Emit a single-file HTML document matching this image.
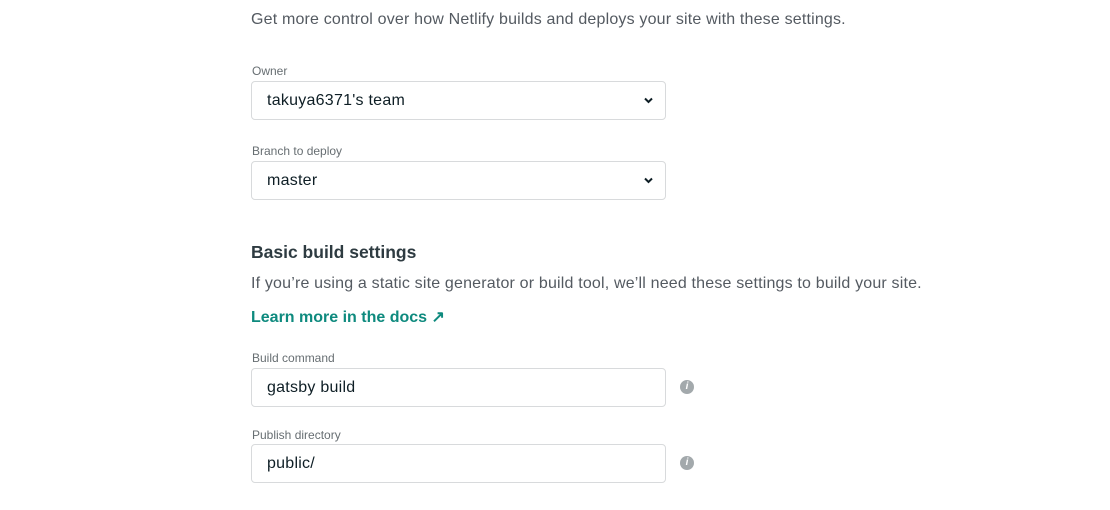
<!DOCTYPE html>
<html><head><style>
body{margin:0;width:1110px;height:510px;background:#fff;font-family:"Liberation Sans",Arial,sans-serif;position:relative;overflow:hidden}
.a{position:absolute}
.p{left:251px;font-size:16px;color:#545a61;letter-spacing:0.18px}
.lab{left:252px;font-size:12px;color:#676e72}
.box{left:251px;height:37px;border:1px solid #d8dadc;border-radius:4px;box-sizing:content-box;font-size:16px;color:#0e1e25;line-height:37px;padding-left:15px;width:398px;letter-spacing:0.25px}
.chev{position:absolute;right:12px;top:15px}
.info{left:680px;width:14px;height:14px;border-radius:50%;background:#a3a9ac;color:#fff;font-size:10px;font-weight:bold;font-style:italic;text-align:center;line-height:14px}
</style></head><body>
<div class="a p" style="top:11px">Get more control over how Netlify builds and deploys your site with these settings.</div>
<div class="a lab" style="top:64px">Owner</div>
<div class="a box" style="top:81px">takuya6371's team<svg class="chev" width="9" height="7" viewBox="0 0 9 7"><path d="M1 1.5l3.5 3.5 3.5-3.5" stroke="#0e1e25" stroke-width="2" fill="none"/></svg></div>
<div class="a lab" style="top:144px">Branch to deploy</div>
<div class="a box" style="top:161px">master<svg class="chev" width="9" height="7" viewBox="0 0 9 7"><path d="M1 1.5l3.5 3.5 3.5-3.5" stroke="#0e1e25" stroke-width="2" fill="none"/></svg></div>
<div class="a" style="left:251px;top:242px;font-size:17.5px;font-weight:bold;color:#2e3b41">Basic build settings</div>
<div class="a p" style="top:275px">If you’re using a static site generator or build tool, we’ll need these settings to build your site.</div>
<div class="a" style="left:251px;top:307px;font-size:16px;font-weight:bold;color:#0e8a7e">Learn more in the docs ↗</div>
<div class="a lab" style="top:351px">Build command</div>
<div class="a box" style="top:368px">gatsby build</div>
<div class="a info" style="top:380px">i</div>
<div class="a lab" style="top:428px">Publish directory</div>
<div class="a box" style="top:444px">public/</div>
<div class="a info" style="top:456px">i</div>
</body></html>
